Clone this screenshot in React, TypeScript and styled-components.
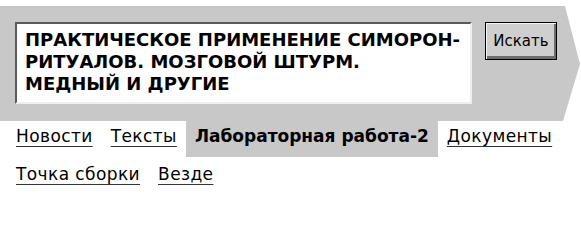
import React from 'react';
import styled, {createGlobalStyle} from 'styled-components';

const GlobalStyle = createGlobalStyle`
  body {
    margin: 0;
    background: #fff;
    font-family: 'DejaVu Sans', Verdana, sans-serif;
  }
`;

const Page = styled.div`
  padding-top: 6px;
  width: 581px;
`;

const SearchPanel = styled.form`
  display: flex;
  align-items: flex-start;
  gap: 13px;
  height: 115px;
  box-sizing: border-box;
  padding: 16px 0 0 15px;
  margin: 0;
  background: #c8c8c8;
  clip-path: polygon(0 0, 565px 0, 580px 58px, 563px 115px, 0 115px);
`;

const Query = styled.textarea`
  width: 457px;
  height: 82px;
  box-sizing: border-box;
  margin: 0;
  padding: 5px 8px;
  border: 2px solid;
  border-color: #5a5a5a #eeeeee #eeeeee #5a5a5a;
  background: #fff;
  color: #000;
  font-family: 'DejaVu Sans', Verdana, sans-serif;
  font-weight: bold;
  font-size: 18px;
  line-height: 22px;
  resize: none;
  overflow: hidden;
  outline: none;
`;

const SearchButton = styled.button`
  width: 72px;
  height: 38px;
  margin: 0;
  padding: 0;
  box-sizing: border-box;
  border: 1px solid #000;
  background: #cfcfcf;
  box-shadow: inset 1px 1px 0 #f4f4f4, inset -2px -3px 0 #6e6e6e;
  color: #000;
  font-family: 'DejaVu Sans', Verdana, sans-serif;
  font-size: 15px;
  cursor: pointer;
`;

const Tabs = styled.nav`
  display: flex;
  flex-wrap: wrap;
  row-gap: 2px;
  padding-left: 7px;
`;

const Tab = styled.a<{$active?: boolean}>`
  display: block;
  padding: 5px 9px 11px;
  font-size: 17px;
  line-height: 20px;
  color: #000;
  background: ${p => (p.$active ? '#c8c8c8' : 'transparent')};
  font-weight: ${p => (p.$active ? 'bold' : 'normal')};
  letter-spacing: ${p => (p.$active ? '0' : '0.4px')};
  text-decoration: ${p => (p.$active ? 'none' : 'underline')};
  text-decoration-color: #333;
  text-underline-offset: 4px;
`;

const tabs = [
  {title: 'Новости'},
  {title: 'Тексты'},
  {title: 'Лабораторная работа-2', active: true},
  {title: 'Документы'},
  {title: 'Точка сборки'},
  {title: 'Везде'},
];

const App = () => (
  <Page>
    <GlobalStyle />
    <SearchPanel onSubmit={e => e.preventDefault()}>
      <Query
        readOnly
        defaultValue={'ПРАКТИЧЕСКОЕ ПРИМЕНЕНИЕ СИМОРОН-\nРИТУАЛОВ. МОЗГОВОЙ ШТУРМ.\nМЕДНЫЙ И ДРУГИЕ'}
      />
      <SearchButton type="submit">Искать</SearchButton>
    </SearchPanel>
    <Tabs>
      {tabs.map(tab => (
        <Tab key={tab.title} href="#" $active={tab.active}>
          {tab.title}
        </Tab>
      ))}
    </Tabs>
  </Page>
);

export default App;
